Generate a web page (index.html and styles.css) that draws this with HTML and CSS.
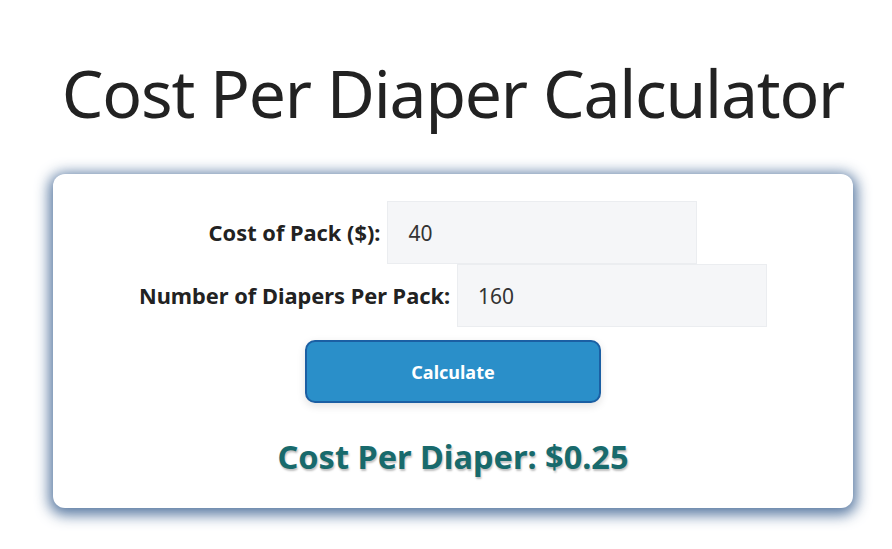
FILE: index.html
```html
<!DOCTYPE html>
<html lang="en">
<head>
<meta charset="utf-8">
<title>Cost Per Diaper Calculator</title>
<link rel="stylesheet" href="styles.css">
</head>
<body>
<main class="page">
  <h1 class="title">Cost Per Diaper Calculator</h1>
  <section class="card">
    <div class="row">
      <label class="label" for="cost">Cost of Pack ($):</label>
      <input class="field" id="cost" type="text" value="40">
    </div>
    <div class="row">
      <label class="label" for="count">Number of Diapers Per Pack:</label>
      <input class="field" id="count" type="text" value="160">
    </div>
    <div class="actions">
      <button class="btn" type="button">Calculate</button>
    </div>
    <p class="result">Cost Per Diaper: $0.25</p>
  </section>
</main>
</body>
</html>
```
FILE: styles.css
```css
html, body {
  margin: 0;
  padding: 0;
  background: #ffffff;
}
body {
  font-family: "Noto Sans", "Open Sans", sans-serif;
  color: #222;
}
.page {
  width: 800px;
  margin-left: 53px;
  padding-top: 50px;
  padding-bottom: 30px;
}
.title {
  margin: 0;
  text-align: center;
  white-space: nowrap;
  font-weight: 400;
  font-size: 66px;
  line-height: 84px;
  color: #222;
  letter-spacing: -1.2px;
}
.card {
  margin-top: 40px;
  background: #fff;
  border-radius: 12px;
  box-shadow: 0 3px 14px 4px rgba(72, 108, 152, 0.9);
  padding-top: 27px;
  height: 334px;
  box-sizing: border-box;
}
.row {
  display: flex;
  justify-content: center;
  align-items: center;
  gap: 7px;
}
.label {
  font-weight: 700;
  font-size: 21.8px;
  color: #222;
}
.field {
  width: 310px;
  height: 63px;
  box-sizing: border-box;
  border: 1px solid #ebedf0;
  background: #f5f6f8;
  padding: 0 20px;
  font-family: inherit;
  font-size: 21px;
  color: #333;
  outline: none;
}
.actions {
  display: flex;
  justify-content: center;
  margin-top: 13px;
}
.btn {
  width: 296px;
  height: 63px;
  border: 2px solid #1b5fa3;
  border-radius: 10px;
  background: #2a8fc9;
  color: #fff;
  font-family: inherit;
  font-weight: 700;
  font-size: 18px;
  box-shadow: 0 3px 8px rgba(0, 0, 0, 0.12);
}
.result {
  margin: 31px 0 0;
  text-align: center;
  font-weight: 700;
  font-size: 32.5px;
  color: #186a6c;
  text-shadow: 1px 2px 2px rgba(0, 0, 0, 0.25);
}
```
